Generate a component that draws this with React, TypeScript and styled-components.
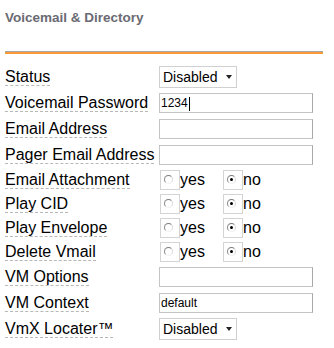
import styled, { createGlobalStyle } from 'styled-components';

const GlobalStyle = createGlobalStyle`
  html, body {
    margin: 0;
    padding: 0;
    background: #ffffff;
    font-family: "Liberation Sans", Arial, sans-serif;
  }
`;

const Panel = styled.div`
  width: 318px;
  padding: 10px 0 0 5px;
`;

const Title = styled.h2`
  margin: 0;
  font-size: 13.5px;
  font-weight: bold;
  color: #6a6a72;
  line-height: 15px;
`;

const Rule = styled.div`
  margin-top: 26px;
  height: 2px;
  border-top: 1px solid #a8a8a8;
  background: #f89a3a;
`;

const Form = styled.div`
  margin-top: 10px;
  display: flex;
  flex-direction: column;
`;

const Row = styled.div<{ $h: number }>`
  display: grid;
  grid-template-columns: 154px 1fr;
  align-items: center;
  height: ${p => p.$h}px;
`;

const Label = styled.span`
  justify-self: start;
  font-size: 16px;
  line-height: 17px;
  color: #000;
  border-bottom: 1px dashed #b8b8b8;
`;

const TextBox = styled.div`
  box-sizing: border-box;
  width: 154px;
  height: 20px;
  border: 1px solid #c4c4c4;
  border-right-color: #a8a8a8;
  font-size: 12px;
  line-height: 18px;
  padding-left: 1px;
  color: #000;
`;

const Caret = styled.span`
  display: inline-block;
  width: 1px;
  height: 14px;
  background: #000;
  vertical-align: middle;
  margin-left: 1px;
`;

const Select = styled.div`
  box-sizing: border-box;
  width: 78px;
  height: 22px;
  border: 1px solid #d0d0d0;
  display: flex;
  align-items: center;
  padding-left: 3px;
  font-size: 14px;
  color: #000;
`;

const Arrow = styled.span`
  margin-left: 9px;
  width: 0;
  height: 0;
  border-left: 3.5px solid transparent;
  border-right: 3.5px solid transparent;
  border-top: 4px solid #222;
`;

const Choices = styled.div`
  display: flex;
  align-items: center;
  font-size: 16px;
  color: #000;
`;

const Choice = styled.span<{ $w: number }>`
  display: flex;
  align-items: center;
  width: ${p => p.$w}px;
`;

const RadioBox = styled.span`
  box-sizing: border-box;
  width: 20px;
  height: 20px;
  border: 1px solid #d4d4d4;
  margin-left: 1px;
  position: relative;
`;

const Circle = styled.span<{ $on: boolean }>`
  position: absolute;
  left: 3px;
  top: 4px;
  box-sizing: border-box;
  width: 9px;
  height: 9px;
  border-radius: 50%;
  border: 1px solid;
  border-color: #7a7a7a #dadada #f0f0f0 #8a8a8a;
  background: #fff;
  &::after {
    content: '';
    display: ${p => (p.$on ? 'block' : 'none')};
    position: absolute;
    left: 2px;
    top: 2px;
    width: 3px;
    height: 3px;
    border-radius: 50%;
    background: #000;
  }
`;

const YesNo = ({ on }: { on: 'yes' | 'no' }) => (
  <Choices>
    <Choice $w={63}>
      <RadioBox><Circle $on={on === 'yes'} /></RadioBox>
      yes
    </Choice>
    <Choice $w={40}>
      <RadioBox><Circle $on={on === 'no'} /></RadioBox>
      no
    </Choice>
  </Choices>
);

const Dropdown = ({ value }: { value: string }) => (
  <Select>
    {value}
    <Arrow />
  </Select>
);

export default function App() {
  return (
    <Panel>
      <GlobalStyle />
      <Title>Voicemail &amp; Directory</Title>
      <Rule />
      <Form>
        <Row $h={26}>
          <Label>Status</Label>
          <Dropdown value="Disabled" />
        </Row>
        <Row $h={26}>
          <Label>Voicemail Password</Label>
          <TextBox>1234<Caret /></TextBox>
        </Row>
        <Row $h={26}>
          <Label>Email Address</Label>
          <TextBox />
        </Row>
        <Row $h={26}>
          <Label>Pager Email Address</Label>
          <TextBox />
        </Row>
        <Row $h={24}>
          <Label>Email Attachment</Label>
          <YesNo on="no" />
        </Row>
        <Row $h={24}>
          <Label>Play CID</Label>
          <YesNo on="no" />
        </Row>
        <Row $h={24}>
          <Label>Play Envelope</Label>
          <YesNo on="no" />
        </Row>
        <Row $h={24}>
          <Label>Delete Vmail</Label>
          <YesNo on="no" />
        </Row>
        <Row $h={26}>
          <Label>VM Options</Label>
          <TextBox />
        </Row>
        <Row $h={26}>
          <Label>VM Context</Label>
          <TextBox>default</TextBox>
        </Row>
        <Row $h={26}>
          <Label>VmX Locater™</Label>
          <Dropdown value="Disabled" />
        </Row>
      </Form>
    </Panel>
  );
}
